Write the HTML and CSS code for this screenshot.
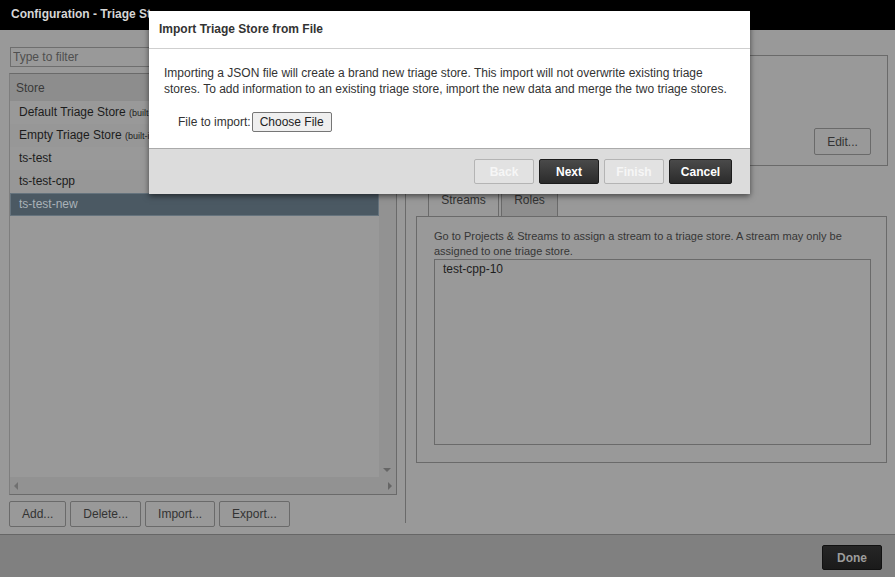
FILE: index.html
```html
<!DOCTYPE html>
<html>
<head>
<meta charset="utf-8">
<link rel="stylesheet" href="styles.css">
</head>
<body>
<div class="app">
  <div class="titlebar">Configuration - Triage Stores</div>
  <div class="main">
    <div class="left">
      <input class="filter" type="text" placeholder="Type to filter">
      <div class="listbox">
        <div class="list-head">Store</div>
        <div class="list-mid">
          <div class="rows">
            <div class="row">Default Triage Store <span class="small">(built-in)</span></div>
            <div class="row alt">Empty Triage Store <span class="small">(built-in)</span></div>
            <div class="row">ts-test</div>
            <div class="row alt">ts-test-cpp</div>
            <div class="row selected">ts-test-new</div>
          </div>
          <div class="vscroll">
            <span class="arr up"></span>
            <span class="arr down"></span>
          </div>
        </div>
        <div class="hscroll">
          <span class="arr lft"></span>
          <span class="arr rgt"></span>
        </div>
      </div>
      <div class="btnrow">
        <button class="btn">Add...</button>
        <button class="btn">Delete...</button>
        <button class="btn">Import...</button>
        <button class="btn">Export...</button>
      </div>
    </div>
    <div class="divider"></div>
    <div class="right">
      <div class="infobox">
        <button class="btn edit">Edit...</button>
      </div>
      <div class="tabs">
        <div class="tab active">Streams</div>
        <div class="tab">Roles</div>
      </div>
      <div class="tabbody">
        <div class="note">Go to Projects &amp; Streams to assign a stream to a triage store. A stream may only be assigned to one triage store.</div>
        <div class="streams">test-cpp-10</div>
      </div>
    </div>
  </div>
  <div class="footer">
    <button class="done">Done</button>
  </div>

  <div class="modal">
    <div class="m-head">Import Triage Store from File</div>
    <div class="m-body">
      <p class="m-text">Importing a JSON file will create a brand new triage store. This import will not overwrite existing triage stores. To add information to an existing triage store, import the new data and merge the two triage stores.</p>
      <div class="m-file"><span>File to import:</span><button class="choose">Choose File</button></div>
    </div>
    <div class="m-foot">
      <button class="mbtn disabled">Back</button>
      <button class="mbtn dark">Next</button>
      <button class="mbtn disabled">Finish</button>
      <button class="mbtn dark cancel">Cancel</button>
    </div>
  </div>
</div>
</body>
</html>
```
FILE: styles.css
```css
* { box-sizing: border-box; }
html, body { margin: 0; padding: 0; }
body {
  width: 895px;
  height: 577px;
  overflow: hidden;
  font-family: "Liberation Sans", Arial, sans-serif;
  font-size: 12px;
  color: #333;
}
.app {
  position: relative;
  width: 895px;
  height: 577px;
  display: flex;
  flex-direction: column;
  background: #999;
}
.titlebar {
  height: 30px;
  line-height: 29px;
  background: #000;
  color: #d6d6d6;
  font-weight: bold;
  padding-left: 11px;
  white-space: nowrap;
  overflow: hidden;
}
.main {
  height: 504px;
  display: flex;
  background: #999;
}
.left {
  width: 397px;
  padding: 17px 0 0 9px;
  display: flex;
  flex-direction: column;
}
.filter {
  width: 388px;
  height: 20px;
  margin-left: 1px;
  border: 1px solid #6e6e6e;
  background: #999;
  font-family: inherit;
  font-size: 12px;
  padding: 0 2px;
  color: #333;
  outline: none;
}
.filter::placeholder { color: #4f4f4f; }
.listbox {
  margin-top: 6px;
  height: 422px;
  border: 1px solid #6a6a6a;
  border-left-color: #7e7e7e;
  display: flex;
  flex-direction: column;
}
.list-head {
  height: 27px;
  line-height: 28px;
  background: #8d8d8d;
  color: #3a3a3a;
  padding-left: 6px;
}
.list-mid {
  flex: 1;
  display: flex;
  min-height: 0;
}
.rows {
  flex: 1;
  background: #999;
}
.row {
  height: 23px;
  line-height: 23px;
  padding-left: 9px;
  color: #1c1c1c;
  white-space: nowrap;
  overflow: hidden;
}
.row.alt { background: #979797; }
.row .small { font-size: 9px; }
.row.selected {
  background: #4b5963;
  border: 1px solid #65737d;
  line-height: 21px;
  padding-left: 8px;
  color: #aab2b8;
}
.vscroll {
  width: 17px;
  background: #929292;
  position: relative;
}
.hscroll {
  height: 17px;
  background: #929292;
  position: relative;
}
.arr {
  position: absolute;
  width: 0;
  height: 0;
  border: 4px solid transparent;
}
.arr.up { top: 5px; left: 4px; border-bottom-color: #666; border-top-width: 0; }
.arr.down { bottom: 5px; left: 4px; border-top-color: #666; border-bottom-width: 0; }
.arr.lft { top: 5px; left: 4px; border-right-color: #707070; border-left-width: 0; }
.arr.rgt { top: 5px; right: 4px; border-left-color: #666; border-right-width: 0; }
.btnrow {
  display: flex;
  gap: 4px;
  margin-top: 6px;
}
.btn {
  height: 26px;
  padding: 0 12px;
  border: 1px solid #6a6a6a;
  border-radius: 2px;
  background: #999;
  color: #333;
  font-family: inherit;
  font-size: 12px;
}
.divider {
  width: 1px;
  background: #6a6a6a;
  margin: 10px 0 11px 8px;
}
.right {
  width: 472px;
  margin-left: 10px;
  padding-top: 25px;
  display: flex;
  flex-direction: column;
}
.infobox {
  height: 111px;
  border: 1px solid #6a6a6a;
  display: flex;
  justify-content: flex-end;
  align-items: flex-end;
  padding: 0 16px 10px 0;
}
.edit { width: 57px; height: 27px; padding: 0; }
.tabs {
  display: flex;
  gap: 2px;
  margin-top: 21px;
  padding-left: 12px;
  height: 29px;
}
.tab {
  border: 1px solid #6a6a6a;
  border-bottom: none;
  line-height: 25px;
  text-align: center;
  color: #333;
}
.tab.active { width: 71px; background: #999; }
.tab:not(.active) { width: 57px; background: #8e8e8e; }
.tabbody {
  width: 471px;
  height: 247px;
  border: 1px solid #6a6a6a;
  padding: 12px 15px 17px 17px;
  display: flex;
  flex-direction: column;
}
.note {
  font-size: 11px;
  line-height: 15px;
  color: #363636;
}
.streams {
  flex: 1;
  border: 1px solid #6a6a6a;
  padding: 1px 8px;
  line-height: 16px;
  color: #1e1e1e;
}
.footer {
  height: 43px;
  background: #808080;
  border-top: 1px solid #666;
  display: flex;
  justify-content: flex-end;
  padding: 10px 13px 0 0;
}
.done {
  width: 60px;
  height: 25px;
  border: 1px solid #111;
  border-radius: 2px;
  background: linear-gradient(#262626, #1a1a1a);
  color: #9c9c9c;
  font-family: inherit;
  font-size: 12px;
  font-weight: bold;
}
.modal {
  position: absolute;
  left: 149px;
  top: 11px;
  width: 601px;
  height: 183px;
  background: #fff;
  box-shadow: 0 2px 6px rgba(0,0,0,0.55);
  display: flex;
  flex-direction: column;
}
.m-head {
  height: 38px;
  line-height: 36px;
  padding-left: 10px;
  font-weight: bold;
  color: #333;
  border-bottom: 1px solid #cfcfcf;
}
.m-body {
  height: 99px;
  padding: 16px 10px 0 15px;
}
.m-text {
  margin: 0;
  line-height: 16px;
  color: #333;
}
.m-file {
  margin-top: 15px;
  padding-left: 14px;
  display: flex;
  align-items: center;
  color: #333;
}
.choose {
  width: 80px;
  height: 20px;
  margin-left: 1px;
  padding: 0;
  border: 1px solid #767676;
  border-radius: 2px;
  background: #efefef;
  color: #222;
  font-family: inherit;
  font-size: 12px;
}
.m-foot {
  flex: 1;
  background: #dcdcdc;
  border-top: 1px solid #aaa;
  display: flex;
  justify-content: flex-end;
  gap: 5px;
  padding: 10px 18px 0 0;
}
.mbtn {
  width: 60px;
  height: 25px;
  border-radius: 2px;
  font-family: inherit;
  font-size: 12px;
  font-weight: bold;
  padding: 0;
}
.mbtn.dark {
  border: 1px solid #1c1c1c;
  background: linear-gradient(#4a4a4a, #2b2b2b);
  color: #fff;
}
.mbtn.cancel { width: 63px; }
.mbtn.disabled {
  border: 1px solid #b4b4b4;
  background: #e2e2e2;
  color: #f6f6f6;
}
```
